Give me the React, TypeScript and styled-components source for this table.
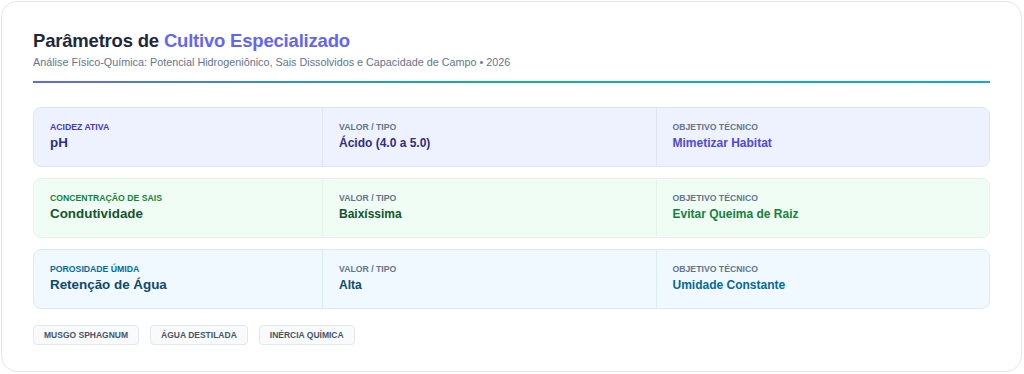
import styled, { createGlobalStyle } from 'styled-components';

const GlobalStyle = createGlobalStyle`
  html, body {
    margin: 0;
    padding: 0;
    background: #ffffff;
  }
  body {
    font-family: 'Liberation Sans', Arial, sans-serif;
  }
`;

const Card = styled.div`
  box-sizing: border-box;
  margin: 1px;
  width: 1021px;
  height: 371px;
  border: 1px solid #e5e7eb;
  border-radius: 16px;
  background: #ffffff;
  padding: 27px 31px 0 31px;
`;

const Title = styled.h1`
  margin: 0;
  font-size: 18.5px;
  line-height: 24px;
  font-weight: 700;
  color: #1e293b;
  letter-spacing: -0.2px;
`;

const Accent = styled.span`
  color: #6366f1;
`;

const Subtitle = styled.p`
  margin: 2px 0 0 0;
  font-size: 10.8px;
  line-height: 14px;
  color: #64748b;
`;

const Divider = styled.div`
  margin-top: 12px;
  height: 2px;
  background: linear-gradient(90deg, #6366f1, #10b981 50%, #0ea5e9);
`;

const Rows = styled.div`
  margin-top: 24px;
  display: flex;
  flex-direction: column;
  gap: 11px;
`;

interface Palette {
  bg: string;
  border: string;
  label: string;
  dark: string;
  mid: string;
}

const Row = styled.div<{ $p: Palette }>`
  display: grid;
  grid-template-columns: 288px 1fr 1fr;
  height: 60px;
  box-sizing: border-box;
  background: ${(p) => p.$p.bg};
  border: 1px solid ${(p) => p.$p.border};
  border-radius: 8px;
`;

const Cell = styled.div<{ $border?: string }>`
  padding: 14px 16px 0 16px;
  border-left: ${(p) => (p.$border ? `1px solid ${p.$border}` : 'none')};
`;

const Label = styled.div<{ $color: string }>`
  font-size: 8.7px;
  line-height: 10px;
  font-weight: 700;
  text-transform: uppercase;
  color: ${(p) => p.$color};
`;

const Name = styled.div<{ $color: string }>`
  margin-top: 2px;
  font-size: 13.4px;
  line-height: 18px;
  font-weight: 700;
  color: ${(p) => p.$color};
`;

const Value = styled.div<{ $color: string }>`
  margin-top: 3px;
  font-size: 12px;
  line-height: 16px;
  font-weight: 700;
  color: ${(p) => p.$color};
`;

const Tags = styled.div`
  margin-top: 16px;
  display: flex;
  gap: 11px;
`;

const Tag = styled.span`
  height: 20px;
  box-sizing: border-box;
  display: inline-flex;
  align-items: center;
  padding: 0 10px;
  font-size: 8.5px;
  font-weight: 700;
  color: #475569;
  background: #f8fafc;
  border: 1px solid #e2e8f0;
  border-radius: 4px;
  text-transform: uppercase;
`;

const indigo: Palette = {
  bg: '#eef2ff',
  border: '#dfe4f7',
  label: '#4338ca',
  dark: '#312e81',
  mid: '#4f46e5',
};
const green: Palette = {
  bg: '#f0fdf4',
  border: '#e3f6e9',
  label: '#15803d',
  dark: '#14532d',
  mid: '#15803d',
};
const sky: Palette = {
  bg: '#f0f9ff',
  border: '#d9ebf6',
  label: '#0369a1',
  dark: '#0c4a6e',
  mid: '#0369a1',
};

const data = [
  { p: indigo, kind: 'Acidez Ativa', name: 'pH', value: 'Ácido (4.0 a 5.0)', goal: 'Mimetizar Habitat' },
  { p: green, kind: 'Concentração de Sais', name: 'Condutividade', value: 'Baixíssima', goal: 'Evitar Queima de Raiz' },
  { p: sky, kind: 'Porosidade Úmida', name: 'Retenção de Água', value: 'Alta', goal: 'Umidade Constante' },
];

export default function App() {
  return (
    <>
      <GlobalStyle />
      <Card>
        <Title>
          Parâmetros de <Accent>Cultivo Especializado</Accent>
        </Title>
        <Subtitle>
          Análise Físico-Química: Potencial Hidrogeniônico, Sais Dissolvidos e Capacidade de Campo • 2026
        </Subtitle>
        <Divider />
        <Rows>
          {data.map((r) => (
            <Row key={r.name} $p={r.p}>
              <Cell>
                <Label $color={r.p.label}>{r.kind}</Label>
                <Name $color={r.p.dark}>{r.name}</Name>
              </Cell>
              <Cell $border={r.p.border}>
                <Label $color="#64748b">Valor / Tipo</Label>
                <Value $color={r.p.dark}>{r.value}</Value>
              </Cell>
              <Cell $border={r.p.border}>
                <Label $color="#64748b">Objetivo Técnico</Label>
                <Value $color={r.p.mid}>{r.goal}</Value>
              </Cell>
            </Row>
          ))}
        </Rows>
        <Tags>
          <Tag>Musgo Sphagnum</Tag>
          <Tag>Água Destilada</Tag>
          <Tag>Inércia Química</Tag>
        </Tags>
      </Card>
    </>
  );
}
